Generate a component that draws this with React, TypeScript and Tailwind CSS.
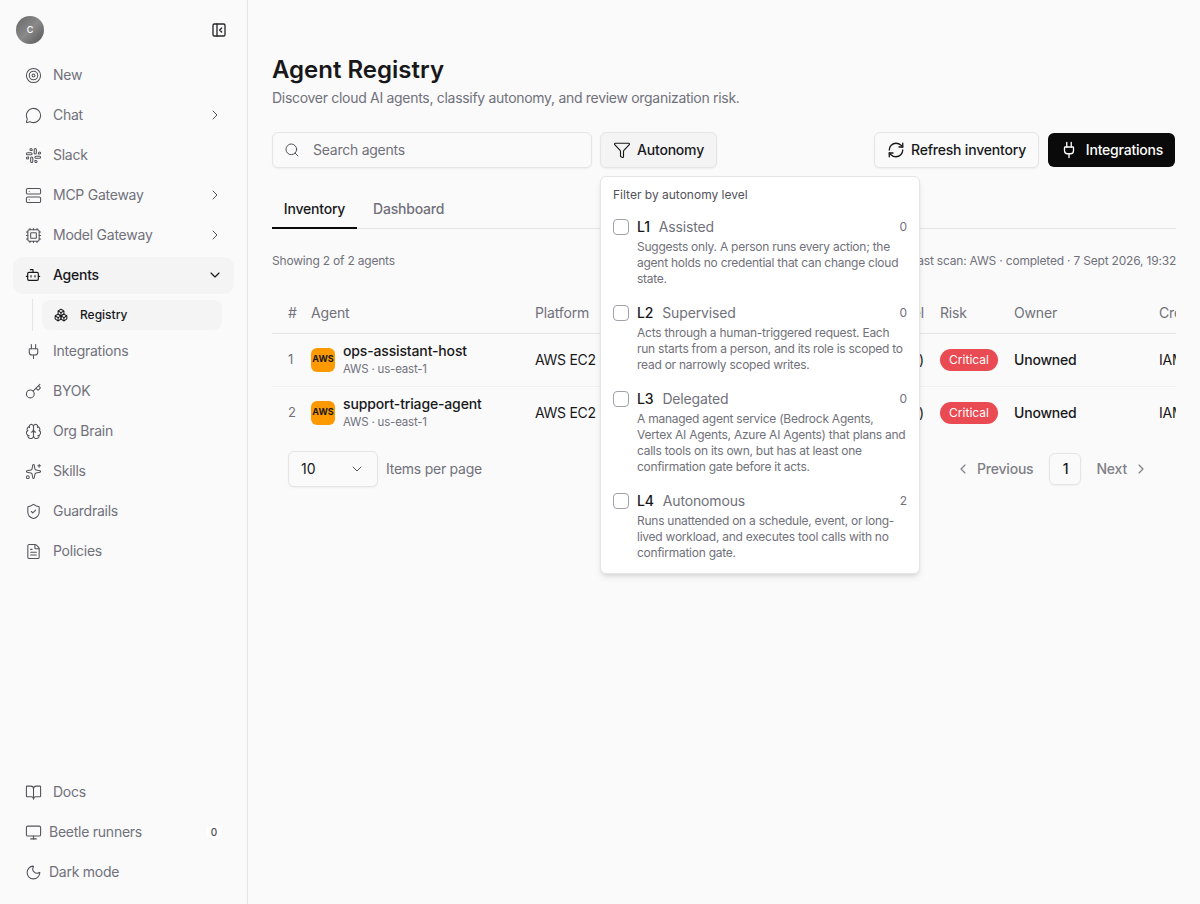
import {
  Bot,
  BookOpen,
  Boxes,
  Brain,
  ChevronDown,
  ChevronLeft,
  ChevronRight,
  Cpu,
  FileText,
  Funnel,
  Key,
  MessageCircle,
  Monitor,
  Moon,
  PanelLeftClose,
  Plug,
  RefreshCw,
  Search,
  Server,
  ShieldCheck,
  Slack,
  Sparkles,
  Target,
} from "lucide-react";

const topNav = [
  { label: "New", icon: Target },
  { label: "Chat", icon: MessageCircle, arrow: true },
  { label: "Slack", icon: Slack },
  { label: "MCP Gateway", icon: Server, arrow: true },
  { label: "Model Gateway", icon: Cpu, arrow: true },
];

const lowerNav = [
  { label: "Integrations", icon: Plug },
  { label: "BYOK", icon: Key },
  { label: "Org Brain", icon: Brain },
  { label: "Skills", icon: Sparkles },
  { label: "Guardrails", icon: ShieldCheck },
  { label: "Policies", icon: FileText },
];

const levels = [
  {
    code: "L1",
    name: "Assisted",
    count: 0,
    text: "Suggests only. A person runs every action; the agent holds no credential that can change cloud state.",
  },
  {
    code: "L2",
    name: "Supervised",
    count: 0,
    text: "Acts through a human-triggered request. Each run starts from a person, and its role is scoped to read or narrowly scoped writes.",
  },
  {
    code: "L3",
    name: "Delegated",
    count: 0,
    text: "A managed agent service (Bedrock Agents, Vertex AI Agents, Azure AI Agents) that plans and calls tools on its own, but has at least one confirmation gate before it acts.",
  },
  {
    code: "L4",
    name: "Autonomous",
    count: 2,
    text: "Runs unattended on a schedule, event, or long-lived workload, and executes tool calls with no confirmation gate.",
  },
];

const agents = [
  { id: 1, name: "ops-assistant-host" },
  { id: 2, name: "support-triage-agent" },
];

function NavItem({ label, icon: Icon, arrow }: { label: string; icon: any; arrow?: boolean }) {
  return (
    <div className="flex h-10 items-center pl-[25px] pr-6 text-[#71717a]">
      <Icon size={17} strokeWidth={1.5} className="shrink-0 text-[#52525b]" />
      <span className="ml-[11px] text-sm tracking-[-0.25px]">{label}</span>
      {arrow && <ChevronRight size={16} strokeWidth={1.5} className="ml-auto text-[#52525b]" />}
    </div>
  );
}

function Sidebar() {
  return (
    <aside className="flex h-full w-[248px] shrink-0 flex-col border-r border-[#e5e5e5] bg-[#fafafa]">
      <div className="flex h-[55px] items-start justify-between pl-4 pr-5 pt-4">
        <div className="flex h-7 w-7 items-center justify-center rounded-full bg-gradient-to-br from-[#666666] via-[#8a8a8a] to-[#555555] text-[9px] font-medium text-white">
          C
        </div>
        <PanelLeftClose size={16} strokeWidth={2} className="mt-1.5 text-[#27272a]" />
      </div>
      {topNav.map((item) => (
        <NavItem key={item.label} {...item} />
      ))}
      <div className="mx-[13px] mt-[2px] flex h-[37px] items-center rounded-[10px] bg-[#f4f4f5] pb-px pl-3 pr-[11px] text-[#18181b]">
        <Bot size={16} strokeWidth={1.75} />
        <span className="ml-3 text-sm font-[450] tracking-[-0.25px]">Agents</span>
        <ChevronDown size={16} strokeWidth={1.75} className="ml-auto" />
      </div>
      <div className="ml-8 mt-[5px] border-l border-[#e5e5e5] py-px pl-[9px] pr-[25px]">
        <div className="flex h-[30px] items-center rounded-lg bg-[#f4f4f5] pl-3 text-[#18181b]">
          <Boxes size={14} strokeWidth={1.75} />
          <span className="ml-3 text-xs font-medium">Registry</span>
        </div>
      </div>
      <div>
        {lowerNav.map((item) => (
          <NavItem key={item.label} {...item} />
        ))}
      </div>
      <div className="mt-auto pb-3">
        <NavItem label="Docs" icon={BookOpen} />
        <div className="flex h-10 items-center pl-[25px] pr-[25px] text-[#71717a]">
          <Monitor size={17} strokeWidth={1.5} className="text-[#52525b]" />
          <span className="ml-[7px] text-sm tracking-[-0.25px]">Beetle runners</span>
          <span className="ml-auto flex h-4 w-4 items-center justify-center rounded-full bg-white text-[10px] font-medium text-[#52525b]">
            0
          </span>
        </div>
        <div className="flex h-10 items-center pl-[25px] text-[#71717a]">
          <Moon size={17} strokeWidth={1.5} className="text-[#52525b]" />
          <span className="ml-[7px] text-sm tracking-[-0.25px]">Dark mode</span>
        </div>
      </div>
    </aside>
  );
}

function AutonomyPopover() {
  return (
    <div className="absolute left-0 top-[44px] z-10 w-[320px] rounded-md border border-[#e5e5e5] bg-white px-3 pb-3 pt-[10px] shadow-md">
      <div className="mb-[14px] text-xs leading-4 text-[#52525b]">Filter by autonomy level</div>
      <div className="flex flex-col gap-4">
        {levels.map((level) => (
          <div key={level.code} className="flex gap-2">
            <span className="mt-0.5 h-4 w-4 shrink-0 rounded border border-[#a1a1aa] bg-white" />
            <div className="min-w-0 flex-1">
              <div className="flex h-5 items-center text-sm tracking-[-0.15px]">
                <span className="font-medium text-[#18181b]">{level.code}</span>
                <span className="ml-[9px] text-[#71717a]">{level.name}</span>
                <span className="ml-auto text-xs text-[#71717a]">{level.count}</span>
              </div>
              <p className="mt-0.5 text-xs leading-4 tracking-[-0.25px] text-[#71717a]">{level.text}</p>
            </div>
          </div>
        ))}
      </div>
    </div>
  );
}

function AgentTable() {
  return (
    <div className="mt-[23px] overflow-hidden">
      <table className="w-[1000px] table-fixed text-left text-sm tracking-[-0.15px]">
        <colgroup>
          <col className="w-[31px]" />
          <col className="w-[224px]" />
          <col className="w-[405px]" />
          <col className="w-[74px]" />
          <col className="w-[145px]" />
          <col className="w-[121px]" />
        </colgroup>
        <thead>
          <tr className="h-[41px] border-b border-[#e5e5e5] text-[#71717a]">
            <th className="pl-4 pt-0.5 font-normal">#</th>
            <th className="pl-2 pt-0.5 font-normal">Agent</th>
            <th className="pl-2 pt-0.5 font-normal">
              <div className="flex justify-between pr-2">
                <span>Platform</span>
                <span>Autonomy level</span>
              </div>
            </th>
            <th className="pl-2 pt-0.5 font-normal">Risk</th>
            <th className="pl-2 pt-0.5 font-normal">Owner</th>
            <th className="pl-2 pt-0.5 font-normal">Credential</th>
          </tr>
        </thead>
        <tbody>
          {agents.map((agent) => (
            <tr key={agent.id} className="h-[53px] border-b border-[#f0f0f0] last:border-b-0">
              <td className="pl-4 text-[13px] text-[#71717a]">{agent.id}</td>
              <td className="pl-2">
                <div className="flex items-center gap-2">
                  <span className="flex h-6 w-6 items-center justify-center rounded-md bg-[#ff9900] text-[9px] font-bold tracking-normal text-[#18181b]">
                    AWS
                  </span>
                  <div>
                    <div className="text-sm font-[450] leading-[18px] text-[#18181b]">{agent.name}</div>
                    <div className="mt-px text-[11.5px] leading-4 tracking-[-0.2px] text-[#71717a]">AWS · us-east-1</div>
                  </div>
                </div>
              </td>
              <td className="pl-2 pr-2 text-[#18181b]">
                <div className="flex justify-between">
                  <span className="tracking-[-0.3px]">AWS EC2</span>
                  <span>(0)</span>
                </div>
              </td>
              <td className="pl-2">
                <span className="inline-flex h-[22px] w-[58px] items-center justify-center rounded-full bg-[#ea4b52] text-xs tracking-normal text-white">
                  Critical
                </span>
              </td>
              <td className="pl-2 font-[450] tracking-[-0.2px] text-[#18181b]">Unowned</td>
              <td className="pl-2 text-[#18181b]">IAM role</td>
            </tr>
          ))}
        </tbody>
      </table>
    </div>
  );
}

export default function App() {
  return (
    <div
      className="flex h-screen overflow-hidden bg-[#fafafa]"
      style={{ fontFamily: "Inter, 'Noto Sans', sans-serif" }}
    >
      <Sidebar />
      <main className="min-w-0 flex-1 px-6 pt-[54px]">
        <h1 className="text-2xl font-semibold leading-8 text-[#18181b]">Agent Registry</h1>
        <p className="mt-[2px] text-sm leading-5 tracking-[-0.3px] text-[#71717a]">
          Discover cloud AI agents, classify autonomy, and review organization risk.
        </p>

        <div className="mt-[24px] flex h-9 items-center">
          <div className="flex h-9 w-[320px] items-center rounded-md border border-[#e5e5e5] bg-[#fafafa] pl-[11px] shadow-xs">
            <Search size={16} strokeWidth={1.5} className="text-[#52525b]" />
            <span className="ml-[13px] text-sm tracking-[-0.25px] text-[#71717a]">Search agents</span>
          </div>
          <div className="relative ml-2">
            <button className="flex h-9 w-[117px] items-center justify-center gap-1.5 rounded-md border border-[#e5e5e5] bg-[#f4f4f5] text-sm font-[450] tracking-[-0.2px] text-[#18181b] shadow-xs">
              <Funnel size={18} strokeWidth={1.5} />
              Autonomy
            </button>
            <AutonomyPopover />
          </div>
          <button className="ml-auto flex h-9 w-[165px] items-center justify-center gap-1.5 rounded-md border border-[#e5e5e5] bg-[#fafafa] text-sm font-[450] tracking-[-0.2px] text-[#18181b] shadow-xs">
            <RefreshCw size={18} strokeWidth={1.75} />
            Refresh inventory
          </button>
          <button className="ml-[9px] mr-px flex h-[34px] w-[127px] items-center justify-center gap-2 rounded-md bg-[#0a0a0a] text-sm font-[450] tracking-[-0.2px] text-white">
            <Plug size={18} strokeWidth={1.75} />
            Integrations
          </button>
        </div>

        <div className="mt-[24px] flex h-[37px] gap-1 border-b border-[#e5e5e5] text-sm tracking-[-0.2px]">
          <div className="-mb-px flex w-[85px] items-center justify-center border-b-2 border-[#0a0a0a] pb-0.5 font-[450] text-[#18181b]">
            Inventory
          </div>
          <div className="flex items-center px-3 pb-0.5 font-[450] text-[#71717a]">Dashboard</div>
        </div>

        <div className="mt-[24px] flex items-center justify-between text-xs leading-4 tracking-[-0.2px] text-[#71717a]">
          <span>Showing 2 of 2 agents</span>
          <span>Last scan: AWS · completed · 7 Sept 2026, 19:32</span>
        </div>

        <AgentTable />

        <div className="mt-3 flex items-center pl-4 pr-[27px]">
          <div className="flex h-9 w-[90px] items-center justify-between rounded-md border border-[#e5e5e5] bg-[#fafafa] pl-3 pr-3 text-sm text-[#18181b] shadow-xs">
            10
            <ChevronDown size={16} strokeWidth={1.5} className="text-[#52525b]" />
          </div>
          <span className="ml-2 text-sm tracking-[-0.25px] text-[#71717a]">Items per page</span>
          <div className="ml-auto flex items-center text-sm font-[450] tracking-[-0.2px] text-[#7f7f86]">
            <ChevronLeft size={16} strokeWidth={1.75} />
            <span className="ml-1.5">Previous</span>
            <span className="ml-4 flex h-8 w-8 items-center justify-center rounded-md border border-[#e5e5e5] text-[#18181b] shadow-xs">
              1
            </span>
            <span className="ml-[15px]">Next</span>
            <ChevronRight size={16} strokeWidth={1.75} className="ml-1.5" />
          </div>
        </div>
      </main>
    </div>
  );
}
